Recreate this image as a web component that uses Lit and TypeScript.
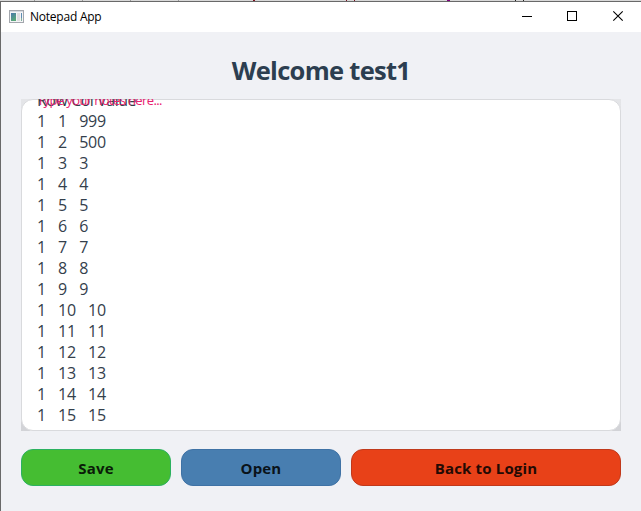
import { LitElement, html, css } from "lit";
import { customElement, property } from "lit/decorators.js";

@customElement("title-bar")
class TitleBar extends LitElement {
  static styles = css`
    :host { display: flex; flex: none; height: 30px; background: #fff; align-items: center; }
    .logo { width: 16px; height: 16px; margin-left: 8px; }
    .name { flex: 1; margin-left: 5px; font: 12px "Open Sans", sans-serif; letter-spacing: -0.23px; color: #000; line-height: 30px; }
    .ctl { width: 46px; height: 30px; flex: none; }
  `;
  render() {
    return html`
      <svg class="logo" viewBox="0 0 16 16" shape-rendering="crispEdges">
        <defs>
          <linearGradient id="g" x1="0" y1="0" x2="0.5" y2="1">
            <stop offset="0" stop-color="#4a78ac" /><stop offset="1" stop-color="#58a878" />
          </linearGradient>
        </defs>
        <rect x="0.5" y="1.5" width="14" height="12" fill="#f4f4f6" stroke="#a3a7ad" />
        <rect x="1" y="2" width="13" height="1" fill="#d5d9df" />
        <rect x="2" y="4" width="5" height="8" fill="url(#g)" />
        <rect x="8" y="4" width="3" height="8" fill="#dedee0" />
        <rect x="12" y="4" width="1" height="5" fill="#5d8db2" />
        <rect x="12" y="9" width="1" height="3" fill="#7fae9c" />
      </svg>
      <span class="name">Notepad App</span>
      <svg class="ctl" viewBox="0 0 46 30" shape-rendering="crispEdges"><path d="M19 14.5h10" stroke="#000" /></svg>
      <svg class="ctl" viewBox="0 0 46 30" shape-rendering="crispEdges"><rect x="18.5" y="9.5" width="9" height="9" fill="none" stroke="#000" /></svg>
      <svg class="ctl" viewBox="0 0 46 30"><path d="M18.3 9.3l9.4 9.4M27.7 9.3l-9.4 9.4" stroke="#000" stroke-width="1.1" /></svg>
    `;
  }
}

@customElement("note-area")
class NoteArea extends LitElement {
  @property({ attribute: false }) rows: string[][] = [];
  static styles = css`
    :host {
      display: block; position: relative; box-sizing: border-box; height: 332px; overflow: hidden;
      background: linear-gradient(#e4e5e8, #d2d3d7);
      font: 16px/21px "Open Sans", sans-serif; color: #34404c;
    }
    .paper { box-sizing: border-box; height: 332px; border: 1px solid #d9dadd; border-radius: 12px; background: #fff; padding-left: 15px; }
    .lines { margin-top: -10px; }
    .line { display: flex; gap: 12.2px; height: 21px; letter-spacing: -0.25px; white-space: pre; }
    .head { gap: 4px; letter-spacing: -0.55px; }
    .hint { position: absolute; left: 16px; top: -8px; font-size: 13px; line-height: 18px; color: #e8206f; letter-spacing: -0.6px; }
  `;
  render() {
    return html`
      <div class="paper">
        <div class="lines">
          <div class="line head"><span>Row</span><span>Col</span><span>Value</span></div>
          ${this.rows.map((r) => html`<div class="line">${r.map((c) => html`<span>${c}</span>`)}</div>`)}
        </div>
      </div>
      <div class="hint">Type your notes here...</div>
    `;
  }
}

@customElement("app-root")
class AppRoot extends LitElement {
  static styles = css`
    :host {
      display: flex; flex-direction: column; box-sizing: border-box; width: 641px; height: 511px;
      overflow: hidden; background: #f0f1f5; font-family: "Open Sans", sans-serif;
    }
    .behind { display: block; flex: none; width: 641px; height: 1px; background: #d8d8d8; }
    .window { flex: 1; display: flex; flex-direction: column; border-top: 1px solid #696969; border-left: 1px solid #696969; }
    .body { padding: 18px 20px 0; }
    h1 { margin: 0; height: 49px; line-height: 40px; text-align: center; font-size: 25.5px; font-weight: 700; color: #2c3e50; letter-spacing: -0.7px; }
    .actions { display: grid; grid-template-columns: 150px 160px 270px; gap: 10px; margin-top: 18px; }
    button {
      box-sizing: border-box; height: 37px; padding: 1px 0 0; border: 1px solid; border-radius: 12px;
      font: 700 15px "Open Sans", sans-serif; letter-spacing: 0.15px;
    }
    .save { background: #45bd32; border-color: #2bb160; color: #0a1c08; }
    .open { background: #487eb0; border-color: #3f72a5; color: #0a131a; }
    .back { background: #e84118; border-color: #c0391b; color: #230a04; }
  `;
  private rows = Array.from({ length: 15 }, (_, i) => {
    const n = i + 1;
    return ["1", String(n), n === 1 ? "999" : n === 2 ? "500" : String(n)];
  });
  render() {
    return html`
      <svg class="behind" viewBox="0 0 641 1" shape-rendering="crispEdges">
        <path d="M34 .5h1M82 .5h1M130 .5h1M178 .5h1" stroke="#999" />
        <path d="M253 .5h2M346 .5h1M354 .5h1" stroke="#7a1020" />
        <path d="M447 .5h3" stroke="#800080" />
        <path d="M515 .5h1M523 .5h1" stroke="#222" />
      </svg>
      <div class="window">
        <title-bar></title-bar>
        <div class="body">
          <h1>Welcome test1</h1>
          <note-area .rows=${this.rows}></note-area>
          <div class="actions">
            <button class="save">Save</button>
            <button class="open">Open</button>
            <button class="back">Back to Login</button>
          </div>
        </div>
      </div>
    `;
  }
}
